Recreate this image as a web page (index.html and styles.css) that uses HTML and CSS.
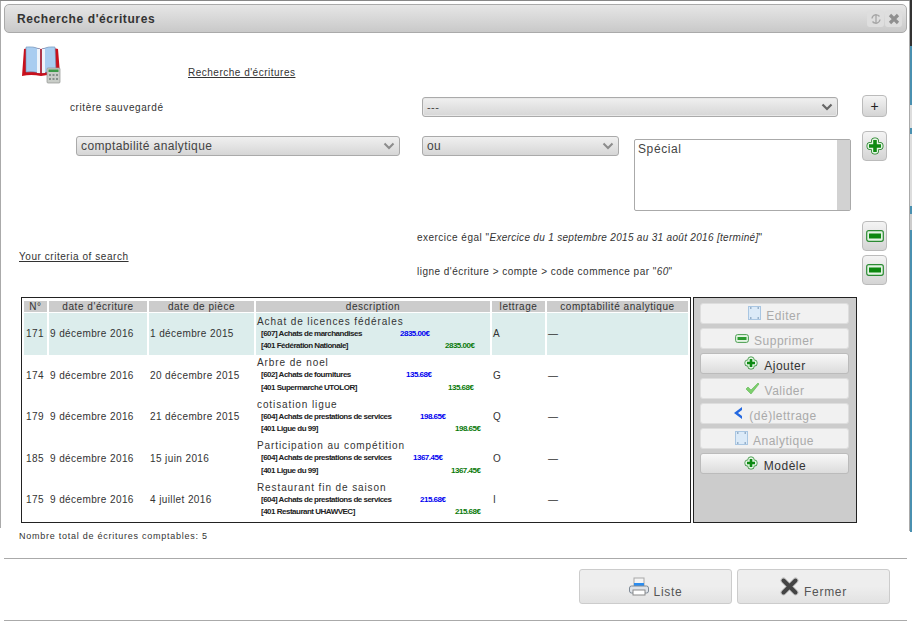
FILE: index.html
```html
<!DOCTYPE html>
<html lang="fr">
<head>
  <meta charset="UTF-8">
  <title>Recherche d'écritures</title>
  <link rel="stylesheet" href="styles.css">
</head>
<body>
  <div class="backdrop"></div>
  <div class="window">
    <header class="titlebar">
      <h1>Recherche d'écritures</h1>
      <div class="title-btns">
        <span class="title-btn"><svg width="12" height="14" viewBox="0 0 12 14"><path d="M9.500 4.500A4.200 4.200 0 0 0 2 6.500M2.500 9.500A4.200 4.200 0 0 0 10 7.500M6 2v10" fill="none" stroke="#a6a6a6" stroke-width="1.300"/></svg></span>
        <span class="title-btn"><svg width="12" height="12" viewBox="0 0 12 12"><path d="M2 2l8 8M10 2l-8 8" stroke="#8f8f8f" stroke-width="3.200"/></svg></span>
      </div>
    </header>

    <div class="head-row">
      <svg class="book" width="40" height="40" viewBox="0 0 40 40">
        <path d="M2 4q9-3 17 0q8-3 17 0l2 25q-9 0-19 2q-10-2-19 0z" fill="#c8101c"/>
        <path d="M4 2q7-1 14 2v24q-7-2-14-1z" fill="#a9cdf0" stroke="#6f93b8" stroke-width=".6"/>
        <path d="M20 4q7-3 13-2l1 25q-7-1-14 1z" fill="#a9cdf0" stroke="#6f93b8" stroke-width=".6"/>
        <path d="M15 4h3v24h-3zM20 4h3v24h-3z" fill="#eef4fa"/>
        <rect x="25" y="23" width="13" height="15" rx="1" fill="#c9cdc8" stroke="#8f948f" stroke-width=".7"/>
        <rect x="26.500" y="24.500" width="10" height="2.500" fill="#3c9a48"/>
        <path d="M27 29h2v2h-2zM30.500 29h2v2h-2zM34 29h2v2h-2zM27 33h2v2h-2zM30.500 33h2v2h-2zM34 33h2v2h-2z" fill="#85908a"/>
      </svg>
      <a class="search-title">Recherche d'écritures</a>
    </div>

    <div class="saved-row">
      <span class="saved-label">critère sauvegardé</span>
      <div class="select saved-select"><span>---</span><svg class="chev" width="12" height="8" viewBox="0 0 12 8"><path d="M1.500 1.500L6 6l4.500-4.500" fill="none" stroke="#666" stroke-width="2.200"/></svg></div>
      <button class="icon-btn plain">+</button>
    </div>

    <div class="filter-row">
      <div class="select filter-field"><span>comptabilité analytique</span><svg class="chev" width="12" height="8" viewBox="0 0 12 8"><path d="M1.500 1.500L6 6l4.500-4.500" fill="none" stroke="#8c8c8c" stroke-width="2"/></svg></div>
      <div class="select filter-op"><span>ou</span><svg class="chev" width="12" height="8" viewBox="0 0 12 8"><path d="M1.500 1.500L6 6l4.500-4.500" fill="none" stroke="#8c8c8c" stroke-width="2"/></svg></div>
      <div class="listbox"><div class="list-text">Spécial</div><div class="list-scroll"></div></div>
      <button class="icon-btn"><svg width="18" height="18" viewBox="0 0 18 18"><path d="M9 4.500v9M4.500 9h9" stroke="#1a7f1f" stroke-width="8" stroke-linecap="round"/><path d="M9 4.500v9M4.500 9h9" stroke="#e4f5e4" stroke-width="6.400" stroke-linecap="round"/><path d="M9 3v12M3 9h12" stroke="#0d8a12" stroke-width="3.600"/></svg></button>
    </div>

    <div class="criteria">
      <a class="criteria-link">Your criteria of search</a>
      <div class="criteria-list">
        <div class="criterion">
          <span class="criterion-text">exercice égal "<i>Exercice du 1 septembre 2015 au 31 août 2016 [terminé]</i>"</span>
          <button class="icon-btn"><svg width="18" height="12" viewBox="0 0 18 12"><rect x=".7" y=".7" width="16.600" height="10.600" rx="2" fill="#e4f4e4" stroke="#2b8a33" stroke-width="1.200"/><rect x="3" y="3.500" width="12" height="5" fill="#0c880f"/></svg></button>
        </div>
        <div class="criterion">
          <span class="criterion-text">ligne d'écriture &gt; compte &gt; code commence par "<i>60</i>"</span>
          <button class="icon-btn"><svg width="18" height="12" viewBox="0 0 18 12"><rect x=".7" y=".7" width="16.600" height="10.600" rx="2" fill="#e4f4e4" stroke="#2b8a33" stroke-width="1.200"/><rect x="3" y="3.500" width="12" height="5" fill="#0c880f"/></svg></button>
        </div>
      </div>
    </div>

    <div class="grid-row">
      <div class="table-box">
        <table>
          <thead>
            <tr><th class="c-id">N°</th><th class="c-date1">date d'écriture</th><th class="c-date2">date de pièce</th><th class="c-desc">description</th><th class="c-let">lettrage</th><th>comptabilité analytique</th></tr>
          </thead>
          <tbody>
            <tr class="selected">
              <td class="num">171</td><td>9 décembre 2016</td><td>1 décembre 2015</td>
              <td class="desc"><div class="d-title">Achat de licences fédérales</div>
                <div class="line"><span class="acct acct-w1">[607] Achats de marchandises</span><span class="debit">2835.00€</span></div>
                <div class="line"><span class="acct acct-w2">[401 Fédération Nationale]</span><span class="credit">2835.00€</span></div></td>
              <td>A</td><td>—</td>
            </tr>
            <tr>
              <td class="num">174</td><td>9 décembre 2016</td><td>20 décembre 2015</td>
              <td class="desc"><div class="d-title">Arbre de noel</div>
                <div class="line"><span class="acct acct-w3">[602] Achats de fournitures</span><span class="debit">135.68€</span></div>
                <div class="line"><span class="acct acct-w4">[401 Supermarché UTOLOR]</span><span class="credit">135.68€</span></div></td>
              <td>G</td><td>—</td>
            </tr>
            <tr>
              <td class="num">179</td><td>9 décembre 2016</td><td>21 décembre 2015</td>
              <td class="desc"><div class="d-title">cotisation ligue</div>
                <div class="line"><span class="acct acct-w5">[604] Achats de prestations de services</span><span class="debit">198.65€</span></div>
                <div class="line"><span class="acct acct-w6">[401 Ligue du 99]</span><span class="credit">198.65€</span></div></td>
              <td>Q</td><td>—</td>
            </tr>
            <tr>
              <td class="num">185</td><td>9 décembre 2016</td><td>15 juin 2016</td>
              <td class="desc"><div class="d-title">Participation au compétition</div>
                <div class="line"><span class="acct acct-w7">[604] Achats de prestations de services</span><span class="debit">1367.45€</span></div>
                <div class="line"><span class="acct acct-w8">[401 Ligue du 99]</span><span class="credit">1367.45€</span></div></td>
              <td>O</td><td>—</td>
            </tr>
            <tr>
              <td class="num">175</td><td>9 décembre 2016</td><td>4 juillet 2016</td>
              <td class="desc"><div class="d-title">Restaurant fin de saison</div>
                <div class="line"><span class="acct acct-w5">[604] Achats de prestations de services</span><span class="debit">215.68€</span></div>
                <div class="line"><span class="acct acct-w6">[401 Restaurant UHAWVEC]</span><span class="credit">215.68€</span></div></td>
              <td>I</td><td>—</td>
            </tr>
          </tbody>
        </table>
      </div>
      <div class="actions">
        <button class="act off"><svg width="13" height="14" viewBox="0 0 13 14"><rect x=".5" y=".5" width="12" height="13" fill="#dbeaf8" stroke="#a9c6e2"/><path d="M2 2h1.500M9.500 2H11M2 12h1.500M9.500 12H11" stroke="#55799c"/></svg><span>Editer</span></button>
        <button class="act off"><svg width="14" height="9" viewBox="0 0 14 9"><rect x=".6" y=".6" width="12.800" height="7.800" rx="2" fill="#e4f4e4" stroke="#4a9d50"/><rect x="2.500" y="3" width="9" height="3" fill="#2a9a2e"/></svg><span>Supprimer</span></button>
        <button class="act"><svg width="16" height="14" viewBox="0 0 16 14"><path d="M8 4v6M5 7h6" stroke="#2a8a30" stroke-width="7" stroke-linecap="round"/><path d="M8 4v6M5 7h6" stroke="#e4f5e4" stroke-width="5.600" stroke-linecap="round"/><path d="M8 3v8M4 7h8" stroke="#0d8a12" stroke-width="2.600"/></svg><span>Ajouter</span></button>
        <button class="act off"><svg width="15" height="13" viewBox="0 0 15 13"><path d="M1 7l2-2 3 3 7-7 1 1-8 10z" fill="#7ccf6c" stroke="#5db350" stroke-width=".6"/></svg><span>Valider</span></button>
        <button class="act off"><svg width="12" height="14" viewBox="0 0 12 14"><path d="M10 1L2 7l8 6V10L6 7l4-3z" fill="#2468e0"/></svg><span>(dé)lettrage</span></button>
        <button class="act off"><svg width="13" height="14" viewBox="0 0 13 14"><rect x=".5" y=".5" width="12" height="13" fill="#dbeaf8" stroke="#a9c6e2"/><path d="M2 2h1.500M9.500 2H11M2 12h1.500M9.500 12H11" stroke="#55799c"/></svg><span>Analytique</span></button>
        <button class="act"><svg width="16" height="14" viewBox="0 0 16 14"><path d="M8 4v6M5 7h6" stroke="#2a8a30" stroke-width="7" stroke-linecap="round"/><path d="M8 4v6M5 7h6" stroke="#e4f5e4" stroke-width="5.600" stroke-linecap="round"/><path d="M8 3v8M4 7h8" stroke="#0d8a12" stroke-width="2.600"/></svg><span>Modèle</span></button>
      </div>
    </div>

    <p class="total">Nombre total de écritures comptables: 5</p>

    <footer class="footer">
      <button class="foot-btn"><svg width="20" height="20" viewBox="0 0 20 20"><rect x="5" y="1" width="10" height="8" fill="#f4f4f4" stroke="#a8a8a8"/><rect x="5" y="6" width="10" height="4" fill="#2a8cf0"/><rect x=".5" y="9" width="19" height="7" rx="2" fill="#dfe3e8" stroke="#7f8a96"/><rect x="4" y="13" width="12" height="5" fill="#fff" stroke="#8a8a8a"/></svg><span>Liste</span></button>
      <button class="foot-btn"><svg width="19" height="19" viewBox="0 0 19 19"><path d="M3.500 3.500l12 12M15.500 3.500l-12 12" stroke="#c4c4c4" stroke-width="6" stroke-linecap="round"/><path d="M3.500 3.500l12 12M15.500 3.500l-12 12" stroke="#444" stroke-width="4" stroke-linecap="round"/></svg><span>Fermer</span></button>
    </footer>
  </div>
</body>
</html>
```

FILE: styles.css
```css
html, body {
  margin: 0;
  height: 100%;
  overflow: hidden;
}
body {
  background: #fff;
  font-family: "Liberation Sans", Arial, sans-serif;
  color: #333;
  position: relative;
}
/* sliver of the page behind the dialog */
.backdrop {
  position: absolute;
  top: 0;
  right: 0;
  width: 2px;
  height: 532px;
  background: linear-gradient(#333 0 46px, #4a90b0 46px 105px, #ddd 105px 128px, #4a90b0 128px 134px, #ddd 134px 206px, #4a90b0 206px 214px, #ccc 214px 230px, #4a90b0 230px);
}
.window {
  position: absolute;
  top: 0;
  left: 0;
  width: 910px;
  height: 621px;
  box-sizing: border-box;
  background:
    linear-gradient(#aaa, #aaa) left top / 1px 527px no-repeat,
    linear-gradient(#aaa, #aaa) right top / 1px 530px no-repeat,
    #fff;
  border-top: 1px solid #888;
  padding: 3px 3px 0 4px;
  display: flex;
  flex-direction: column;
}

/* title */
.titlebar {
  height: 29px;
  flex: none;
  box-sizing: border-box;
  border: 1px solid #aaa;
  border-radius: 5px;
  background: linear-gradient(#e6e6e6, #c9c9c9);
  display: flex;
  align-items: center;
  justify-content: space-between;
  padding: 0 4px 0 12px;
}
.titlebar h1 {
  margin: 0;
  font-size: 12px;
  font-weight: bold;
  letter-spacing: .6px;
}
.title-btns {
  display: flex;
  gap: 1px;
}
.title-btn {
  width: 17px;
  height: 17px;
  background: #dedede;
  border-radius: 3px;
  display: flex;
  align-items: center;
  justify-content: center;
}

.head-row {
  display: flex;
  height: 50px;
  padding: 12px 0 0 18px;
  flex: none;
}
.search-title {
  margin: 22px 0 0 126px;
  font-size: 10px;
  letter-spacing: .5px;
  text-decoration: underline;
  line-height: 12px;
  height: 12px;
}
.saved-row {
  display: flex;
  align-items: flex-start;
  height: 36px;
  padding-left: 66px;
  flex: none;
}
.saved-label {
  width: 352px;
  font-size: 10px;
  letter-spacing: .6px;
  line-height: 26px;
}
.select {
  box-sizing: border-box;
  border: 1px solid #aaa;
  border-radius: 3px;
  background: linear-gradient(#f0f0f0, #d6d6d6);
  display: flex;
  align-items: center;
  justify-content: space-between;
  font-size: 12px;
  letter-spacing: .4px;
  color: #444;
  padding: 0 4px;
}
.saved-select {
  width: 416px;
  height: 20px;
  margin-top: 2px;
  font-size: 11px;
  box-shadow: inset 0 0 0 1px #e8e8e8;
}
.saved-row .plain {
  margin-left: 24px;
  height: 22px;
}
.icon-btn {
  box-sizing: border-box;
  width: 25px;
  height: 30px;
  padding: 0;
  border: 1px solid #bbb;
  border-radius: 4px;
  background: linear-gradient(#f4f4f4, #d4d4d4);
  display: flex;
  align-items: center;
  justify-content: center;
  font-family: inherit;
  font-size: 14px;
  color: #222;
  flex: none;
}

.filter-row {
  display: flex;
  align-items: flex-start;
  height: 90px;
  padding-left: 72px;
  flex: none;
}
.filter-field {
  width: 324px;
  height: 20px;
  margin: 5px 22px 0 0;
}
.filter-op {
  width: 197px;
  height: 20px;
  margin: 5px 15px 0 0;
}
.listbox {
  box-sizing: border-box;
  width: 217px;
  height: 72px;
  border: 1px solid #aaa;
  border-radius: 2px;
  display: flex;
  justify-content: space-between;
  margin: 8px 11px 0 0;
}
.list-text {
  font-size: 12px;
  letter-spacing: .6px;
  padding: 2px 3px;
  color: #444;
}
.list-scroll {
  width: 13px;
  background: #d2d2d2;
}

.criteria {
  display: flex;
  height: 64px;
  flex: none;
  padding-left: 15px;
}
.criteria-link {
  width: 398px;
  font-size: 10px;
  letter-spacing: .55px;
  text-decoration: underline;
  margin-top: 30px;
}
.criteria-list {
  width: 470px;
  display: flex;
  flex-direction: column;
  gap: 4px;
}
.criterion {
  display: flex;
  align-items: center;
  justify-content: space-between;
}
.criterion-text {
  font-size: 10px;
  letter-spacing: .48px;
  padding-top: 3px;
}
.criterion-text i {
  letter-spacing: .31px;
}

.grid-row {
  display: flex;
  gap: 2px;
  padding-left: 17px;
  margin-top: 12px;
  flex: none;
}
.table-box {
  box-sizing: border-box;
  width: 670px;
  height: 226px;
  border: 1px solid #222;
  padding: 3px 0 0;
}
table {
  width: 100%;
  border-collapse: separate;
  border-spacing: 2px 0;
  table-layout: fixed;
  font-size: 10px;
  letter-spacing: .4px;
}
th {
  background: #ccc;
  font-weight: normal;
  font-size: 10px;
  letter-spacing: .55px;
  height: 11px;
  line-height: 11px;
  padding: 0;
  border-bottom: 1px solid #fff;
}
td {
  padding: 0 1px;
  height: 41.500px;
  vertical-align: middle;
}
td.num {
  padding-left: 2px;
}
.c-id { width: 23px; }
.c-date1 { width: 98px; }
.c-date2 { width: 105px; }
.c-desc { width: 234px; }
.c-let { width: 53px; }
.selected td {
  background: #dcedec;
}
.d-title {
  letter-spacing: .9px;
  line-height: 13px;
}
.line {
  display: flex;
  font-size: 8px;
  line-height: 12.500px;
  letter-spacing: -.5px;
  padding-left: 4px;
  font-weight: bold;
  color: #222;
}
.acct { flex: none; }
.debit { color: #0000f0; }
.credit { color: #0a7a0a; }
.acct-w1 { width: 139px; }
.acct-w2 { width: 184px; }
.acct-w3 { width: 145px; }
.acct-w4 { width: 187px; }
.acct-w5 { width: 159px; }
.acct-w6 { width: 194px; }
.acct-w7 { width: 152px; }
.acct-w8 { width: 190px; }

.actions {
  box-sizing: border-box;
  width: 164px;
  height: 226px;
  background: #ccc;
  border: 1px solid #222;
  padding: 5px 7px 5px 6px;
  display: flex;
  flex-direction: column;
  gap: 4px;
}
.act {
  height: 21px;
  flex: none;
  box-sizing: border-box;
  padding: 0;
  border: 1px solid #bbb;
  border-radius: 3px;
  background: linear-gradient(#f8f8f8, #dcdcdc);
  font-family: inherit;
  font-size: 12px;
  letter-spacing: .5px;
  color: #333;
  display: flex;
  align-items: center;
  justify-content: center;
  gap: 5px;
}
.act span {
  padding-top: 5px;
}
.act svg {
  margin-top: -1px;
}
.act.off {
  background: #f1f1f1;
  border-color: #ddd;
  color: #aaa;
}

.total {
  margin: 7px 0 0 15px;
  font-size: 9px;
  letter-spacing: .75px;
  line-height: 12px;
  height: 28px;
  flex: none;
}
.footer {
  flex: 1;
  border-top: 1px solid #aaa;
  border-bottom: 1px solid #aaa;
  display: flex;
  justify-content: flex-end;
  align-items: flex-start;
  gap: 5px;
  padding: 10px 17px 0 0;
}
.foot-btn {
  box-sizing: border-box;
  width: 153px;
  height: 35px;
  padding: 0;
  border: 1px solid #ccc;
  border-radius: 3px;
  background: linear-gradient(#eee 50%, #e2e2e2);
  font-family: inherit;
  font-size: 12px;
  letter-spacing: .7px;
  color: #555;
  display: flex;
  align-items: center;
  justify-content: center;
  gap: 5px;
}
.foot-btn span {
  padding-top: 10px;
}
```
